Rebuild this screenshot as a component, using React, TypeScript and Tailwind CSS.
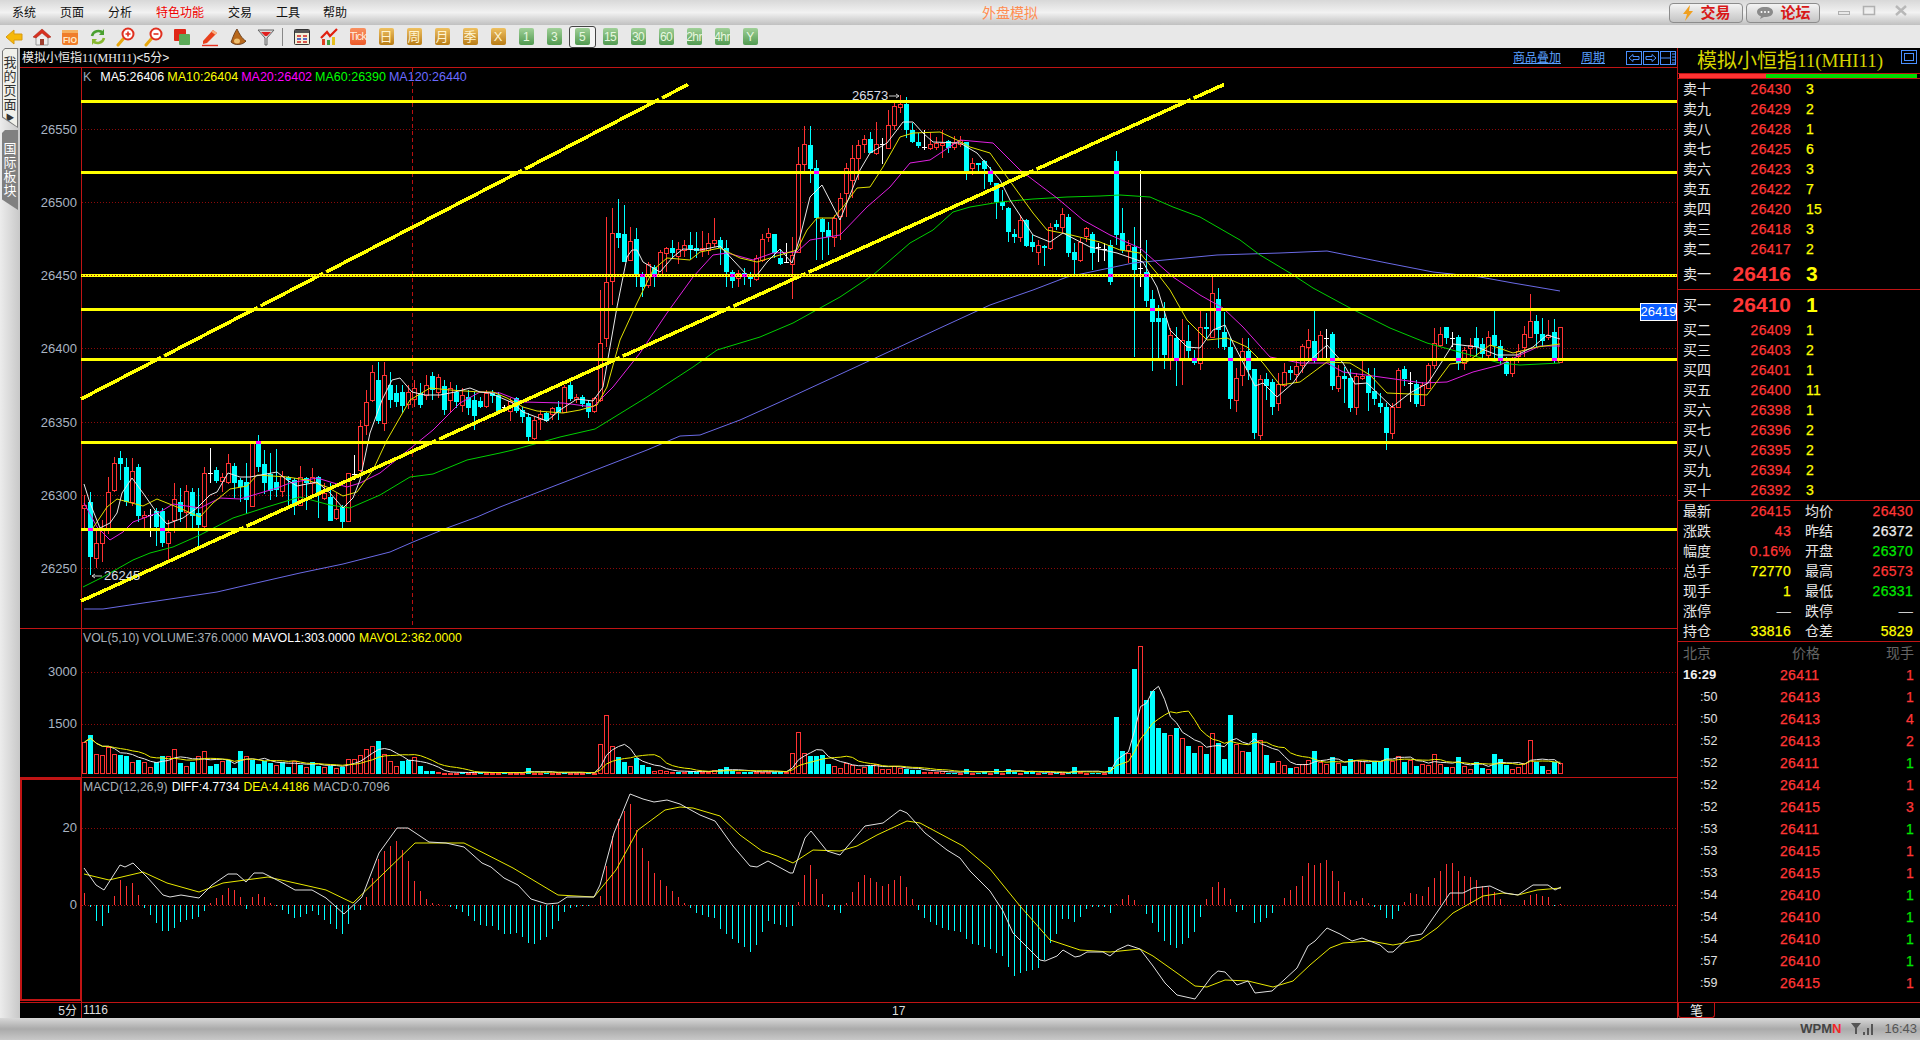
import React from "react";

type P = [number, number];
type C = { t: string; a: number; b: number; h: number; l: number };

const parse = (s: string, base: number): C[] =>
  s.trim().split(",").map((r) => {
    const [t, a, b, h, l] = r.trim().split(/\s+/);
    return { t, a: base + +a / 3, b: base + +b / 3, h: base + +h / 3, l: base + +l / 3 };
  });

const z5 = `r 315 325 285 387,c 305 470 275 525,r 430 475 385 503,r 388 430 360 485,r 277 390 232 402,r 190 272 170 275,c 175 192 153 240,c 200 305 175 318,r 212 305 175 318,c 202 348 192 365,r 345 352 332 392,w 345 345 328 410,c 332 380 325 437,c 332 430 325 440,r 395 428 360 485,r 298 362 250 400,c 305 335 265 365,r 272 335 255 390,c 277 347 265 388,c 340 375 265 440,r 220 380 200 385,w 220 220 145 250,c 210 242 200 248,r 230 242 218 275,r 190 248 162 252,c 198 248 190 295,c 240 262 235 305,c 245 300 190 342,r 130 318 125 322,c 125 200 105 215,c 192 250 150 282,c 222 272 160 300,c 245 270 148 290,r 228 272 212 292,c 230 240 228 325,c 240 315 235 345,r 230 315 198 318,c 235 248 230 330,r 230 248 205 285,c 230 285 228 355,r 280 295 250 300,c 290 362 250 362,r 328 356 280 360,c 320 365 315 383,r 220 365 218 365,w 222 222 165 240,r 78 210 60 215,r 5 75 -30 105`;
const zs = `r 1116 1200 1095 1206,c 1140 1263 1086 1272,r 1125 1269 1086 1293,c 1155 1200 1116 1224,c 1179 1206 1155 1221,c 1176 1218 1155 1239,r 1176 1212 1155 1227,r 1164 1197 1140 1221,c 1179 1215 1149 1224,r 1155 1185 1125 1200,c 1128 1170 1116 1200,r 1131 1176 1122 1194,c 1158 1230 1140 1245,r 1164 1200 1146 1236,c 1176 1206 1155 1224,r 1185 1215 1164 1236,c 1191 1224 1170 1245,c 1200 1248 1176 1290`;
const z10 = `c 632 652 620 655,r 610 650 600 655,c 610 618 600 640,c 615 665 605 668,w 652 652 645 665,r 632 662 625 692,c 625 662 620 670,c 660 682 650 700,c 680 740 670 762,r 690 745 680 750,r 672 688 660 720,c 670 692 665 695,r 655 673 650 690,c 650 668 632 690,r 590 665 585 670,c 585 628 567 632,r 622 628 612 640,c 622 642 615 650,c 640 665 630 685,r 625 665 622 670,r 460 632 300 635,r 275 442 82 470,r 130 275 55 345,c 130 145 28 175,c 132 215 45 215,r 152 208 110 210,c 148 255 115 290,c 255 290 245 320,r 222 285 215 295,c 232 262 225 292,r 187 255 180 258,r 175 190 170 245,c 175 190 150 205,r 178 198 155 222,r 165 180 150 200,c 165 178 125 208,c 175 182 125 205`;
const z7 = `r 475 482 422 500,r 460 480 430 495,r 450 458 385 470,c 450 475 440 525,c 475 545 450 590,c 545 572 540 595,r 550 565 540 592,c 548 560 535 585,c 558 566 545 590,r 505 568 495 572,r 447 510 432 515,r 430 443 415 455,c 432 490 432 505,c 505 522 480 525,w 515 515 460 520,r 495 523 440 628,r 222 485 170 490,r 162 222 108 245,c 165 238 108 280,c 235 385 210 510,c 388 425 385 510,c 420 442 395 495,r 385 442 375 470,r 325 378 310 450,r 235 310 220 380,r 205 272 165 325,r 165 205 150 270,r 148 163 135 190,c 148 188 125 190,r 162 188 95 195,w 162 162 145 222,r 105 173 60 178,r 48 105 38 120,r 42 50 16 70,c 42 120 20 145,c 120 155 100 160,c 155 168 130 175,w 172 172 120 180,r 162 175 125 180,r 160 173 140 180,r 158 165 120 205,c 153 175 150 190,r 160 172 138 180,r 150 162 138 170,c 155 245 155 270,r 220 235 205 255,c 220 225 218 250,c 212 237 210 298,c 245 275 230 285,c 280 335 278 387,c 335 348 300 360,c 355 427 352 455,c 432 440 418 460,r 390 440 375 455,c 390 468 388 470,c 455 470 435 485,r 465 487 450 525,c 468 475 465 527,r 412 475 400 480,c 402 412 390 420,r 372 410 355 430,c 380 490 372 500,c 487 510 460 560,r 455 510 445 515,r 415 440 410 455,c 432 488 425 540,w 470 470 460 515,w 478 478 460 512`;
const z8 = `c 15 125 0 135,c -237 -15 -267 15,c -21 30 -96 39,r 15 30 0 70,c 20 90 -39 350,w 84 84 -210 141,c 95 183 0 200,c 178 245 150 392,c 235 245 195 360,c 235 345 185 388,r 285 358 265 390,c 295 358 262 437,r 300 358 238 435,c 303 332 255 360,c 355 368 330 375,r 262 370 210 390,c 262 268 220 300,r 160 292 105 295,c 178 270 145 325,c 277 322 215 330,c 320 477 295 507,r 415 482 385 515,r 333 405 295 437,c 333 390 295 420,c 387 578 387 597,r 418 587 405 600,c 418 438 400 480,c 427 500 418 525,r 433 490 400 512,r 397 437 368 440,c 390 400 378 420,r 378 402 360 425,r 318 375 312 400,r 300 320 268 355,c 303 358 210 368,r 285 355 272 360,w 295 295 268 362,c 282 438 275 450,r 408 443 375 455,c 408 416 380 490,c 415 503 388 515,r 408 502 400 525,r 408 415 358 420,c 408 458 385 512,c 452 477 385 495,c 490 500 460 520,c 500 578 490 630,r 500 578 490 597,r 390 502 385 503,c 388 418 378 438,w 428 428 395 485,c 432 492 420 500,r 434 494 425 495,r 375 445 370 448,r 310 375 265 388,r 283 315 262 320,c 262 295 262 312,w 295 295 275 320,c 291 368 285 390,r 330 370 320 390,r 315 325 295 350,c 294 322 262 352,c 312 342 295 355,r 292 345 272 358,c 285 318 210 360,c 318 362 300 375,c 365 402 352 408,r 360 398 350 410,r 332 348 312 370,r 283 322 258 350,r 243 292 162 295,c 243 282 225 320,c 282 302 235 320,r 285 292 240 300,c 276 358 238 368,r 262 368 262 368`;
const candles: C[] = [
  ...parse(z5, 400),
  ...parse(zs, 0),
  ...parse(z10, 190),
  ...parse(z7, 90),
  ...parse(z8, 240),
];

const vols: number[] = [
  95, -118, 60, 56, 82, 60, -56, -54, 35, -42, 35, 20, -35, -54, 55, 74, -34, 25, -35, 55, 70, -24, -30, 38, -42, -18, -68, 53, -42, -30, -38, -34, 28, -35, -22, 38, -28, 20, -35, -25, 20, -25, 18, -22, 45, 45, 58, 75, 85, -100, 60, 38, 25, -38, -42, 52, -25, -8, -8, 5, 3, 3, 3, -6, 3, 3, -5, 3, 3, 3, -3, 3, 3, 3, -18, 3, 3, -3, 3, 3, -3, 3, 3, 3, -3, 3, 90, 178, 85, -52, -35, 25, -48, -28, -20, 8, 12, 8, 6, -6,
  6, -8, -6, 6, 6, 12, -14, -20, -8, 5, -6, -6, 6, 6, 6, -6, -6, 6, 64, 127, 64, -53, -53, -58, -29, 24, 18, 34, 28, 16, 22, -24, 30, 16, 14, 25, 18, -14, -12, -12, 6, 6, 6, 8, -3, -3, 3, -16, 3, -4, -6, 3, -16, 3, -14, -6, 4, -6, -6, 4, -3, 3, -3, 3, -3, -22, 5, 4, -3, -4, 4, -20, -172, -70, 64, -316, 385,
  -223, -250, -137, -122, 118, -137, 107, -83, -62, 85, -60, 124, -92, -44, -177, 90, 70, -65, -122, 103, -56, -32, 40, 28, -18, 20, 30, 42, -68, 36, 30, -50, 34, -24, -44, 42, 38, -30, -36, -38, -78, 38, 55, -37, 42, -24, 30, 26, 60, 30, -20, 22, -50, 24, 16, -35, -18, 16, -60, -44, -26, 16, 22, 34, 103, -36, -24, 12, -36, 34,
];

const ma5: P[] = [[84,484],[90,503],[100,528],[110,523],[117,513],[122,493],[132,478],[143,493],[157,513],[167,524],[183,518],[197,508],[210,495],[217,492],[228,473],[240,477],[250,477],[277,472],[287,480],[297,486],[317,482],[330,493],[343,508],[353,498],[360,480],[370,433],[382,400],[392,380],[400,378],[412,392],[425,395],[440,395],[455,392],[470,388],[480,392],[490,393],[513,403],[523,412],[547,421],[560,410],[577,399],[593,401],[603,387],[617,307],[627,257],[632,250],[637,250],[643,262],[660,272],[673,257],[683,249],[700,250],[720,246],[733,260],[747,275],[757,275],[767,262],[780,249],[792,263],[800,237],[810,197],[822,185],[840,220],[860,170],[870,153],[887,143],[903,122],[913,122],[923,133],[933,142],[960,143],[977,153],[1000,180],[1010,200],[1033,235],[1050,242],[1063,233],[1090,247],[1117,253],[1143,262],[1157,287],[1170,330],[1187,347],[1200,348],[1213,330],[1225,325],[1233,343],[1247,370],[1255,386],[1263,383],[1277,397],[1293,383],[1307,363],[1327,345],[1343,363],[1355,384],[1367,383],[1392,407],[1410,393],[1428,383],[1443,360],[1453,344],[1477,347],[1497,355],[1517,355],[1533,347],[1547,335],[1560,339]];
const ma10: P[] = [[93,528],[107,507],[117,499],[143,506],[157,499],[177,507],[200,517],[213,503],[230,489],[247,486],[257,475],[287,477],[307,480],[327,487],[343,496],[357,492],[373,470],[387,440],[410,400],[430,388],[450,390],[480,392],[493,392],[507,398],[523,407],[537,411],[563,413],[580,410],[597,405],[607,387],[620,340],[637,303],[653,270],[667,258],[690,260],[700,252],[720,248],[740,258],[757,262],[780,255],[797,250],[807,230],[817,218],[833,218],[843,207],[857,188],[870,187],[883,167],[900,137],[913,133],[940,132],[957,140],[970,147],[990,153],[1007,177],[1033,213],[1047,230],[1067,234],[1100,242],[1120,250],[1140,253],[1160,277],[1170,290],[1187,320],[1207,340],[1227,338],[1247,347],[1263,363],[1280,385],[1300,382],[1327,362],[1350,363],[1370,375],[1387,393],[1410,394],[1427,395],[1450,364],[1467,362],[1490,345],[1513,353],[1537,347],[1560,344]];
const ma20: P[] = [[84,503],[97,527],[110,540],[123,532],[133,522],[160,512],[173,504],[200,508],[220,498],[240,499],[277,488],[290,483],[317,478],[347,487],[360,483],[380,473],[433,430],[460,403],[480,392],[500,393],[523,402],[563,403],[593,407],[613,387],[640,353],[667,313],[693,277],[713,255],[727,253],[753,260],[773,253],[797,252],[810,240],[840,235],[867,207],[890,187],[910,163],[930,160],[960,140],[993,143],[1020,170],[1057,198],[1083,220],[1110,235],[1140,248],[1173,277],[1200,295],[1223,308],[1243,327],[1270,357],[1300,363],[1327,363],[1343,372],[1373,376],[1423,383],[1447,382],[1473,372],[1500,365],[1520,355],[1540,346],[1560,346]];
const ma60: P[] = [[83,587],[103,577],[133,560],[150,553],[173,547],[200,535],[233,518],[267,507],[300,497],[330,505],[350,508],[380,495],[410,477],[433,474],[467,460],[500,453],[513,450],[560,437],[595,429],[647,397],[693,367],[717,350],[760,337],[793,323],[840,297],[873,275],[910,243],[933,230],[953,212],[970,207],[1000,202],[1033,199],[1067,197],[1100,196],[1120,195],[1150,197],[1173,207],[1200,217],[1240,240],[1260,255],[1290,273],[1313,288],[1350,308],[1390,328],[1427,343],[1463,353],[1500,363],[1520,365],[1560,363]];
const ma120: P[] = [[84,609],[103,609],[150,602],[217,592],[243,586],[300,573],[343,564],[390,552],[413,542],[447,528],[477,517],[500,507],[647,450],[680,436],[700,435],[740,420],[780,402],[897,348],[940,328],[990,305],[1033,290],[1067,277],[1100,270],[1133,263],[1217,255],[1280,253],[1327,251],[1387,263],[1433,272],[1480,277],[1513,283],[1560,291]];

const diff: P[] = [[84,868],[96,885],[104,890],[120,865],[125,867],[133,863],[147,877],[163,895],[170,897],[181,895],[199,898],[212,885],[228,874],[237,874],[246,882],[254,873],[263,873],[279,881],[295,890],[312,890],[326,898],[344,914],[362,897],[379,853],[397,828],[408,828],[429,842],[446,843],[464,847],[482,863],[491,867],[504,878],[518,885],[531,899],[547,904],[558,903],[567,897],[594,897],[600,885],[614,833],[630,794],[643,799],[654,802],[667,800],[680,804],[700,815],[715,821],[733,846],[750,866],[757,867],[768,861],[790,873],[793,873],[805,838],[811,831],[827,851],[840,855],[865,826],[883,823],[900,810],[907,813],[925,833],[947,850],[960,858],[970,871],[990,891],[1003,911],[1013,933],[1023,943],[1040,960],[1045,961],[1057,956],[1063,950],[1075,957],[1080,956],[1087,952],[1103,952],[1110,956],[1117,950],[1128,945],[1140,949],[1153,966],[1165,983],[1177,995],[1195,999],[1212,976],[1218,971],[1225,972],[1237,985],[1248,981],[1255,993],[1272,991],[1297,968],[1308,946],[1315,941],[1327,928],[1340,934],[1352,941],[1362,938],[1380,945],[1388,952],[1393,952],[1410,936],[1422,934],[1440,908],[1450,893],[1463,893],[1473,888],[1490,886],[1505,893],[1518,895],[1533,885],[1548,885],[1555,890],[1561,887]];
const dea: P[] = [[84,874],[109,880],[143,872],[167,883],[199,892],[223,883],[268,877],[304,885],[326,890],[353,903],[384,873],[415,843],[464,843],[513,868],[558,895],[594,897],[616,870],[638,830],[665,810],[680,807],[693,808],[720,816],[740,835],[762,851],[777,856],[793,863],[813,850],[840,851],[857,846],[877,835],[907,821],[920,823],[963,846],[990,869],[1020,906],[1050,940],[1080,950],[1110,952],[1140,949],[1153,956],[1177,973],[1195,986],[1207,987],[1225,980],[1248,981],[1273,987],[1293,981],[1310,965],[1330,948],[1343,943],[1370,941],[1393,945],[1420,940],[1437,928],[1453,913],[1483,896],[1503,893],[1518,895],[1537,890],[1561,888]];

const pts = (a: P[]) => a.map((p) => p.join(",")).join(" ");
const interp = (a: P[], x: number) => {
  if (x <= a[0][0]) return a[0][1];
  for (let i = 1; i < a.length; i++) {
    if (x <= a[i][0]) {
      const t = (x - a[i - 1][0]) / (a[i][0] - a[i - 1][0]);
      return a[i - 1][1] + t * (a[i][1] - a[i - 1][1]);
    }
  }
  return a[a.length - 1][1];
};
const xc = (i: number) => 84 + 6 * i;

const hLines = [100, 171, 274, 308, 358, 441, 528];
const dots = [129, 202, 275, 348, 422, 495, 568];
const diag: [number, number, number, number][] = [
  [81, 399, 688, 84.5],
  [81, 601, 1224, 84.5],
];

function KPane() {
  return (
    <svg width={1657} height={560} viewBox="20 68 1657 560" className="block">
      {dots.map((y) => (
        <line key={y} x1={82} x2={1677} y1={y + 0.5} y2={y + 0.5} stroke="#8c0a0a" strokeDasharray="1 2" />
      ))}
      <line x1={412.5} x2={412.5} y1={68} y2={628} stroke="#b81010" strokeDasharray="4 3" />
      <line x1={81.5} x2={81.5} y1={68} y2={628} stroke="#c01414" />
      <g shapeRendering="crispEdges">
        {candles.map((c, i) => {
          const x = xc(i);
          if (c.t === "c")
            return (
              <g key={i} fill="#00ffff">
                <rect x={x} y={c.h} width={1} height={Math.max(1, c.l - c.h)} />
                <rect x={x - 2} y={c.a} width={5} height={Math.max(1, c.b - c.a)} />
              </g>
            );
          if (c.t === "w")
            return (
              <g key={i} fill="#ffffff">
                <rect x={x} y={c.h} width={1} height={c.l - c.h} />
                <rect x={x - 2} y={c.a} width={5} height={1} />
              </g>
            );
          return (
            <g key={i}>
              <rect x={x} y={c.h} width={1} height={Math.max(0, c.a - c.h)} fill="#ff3232" />
              <rect x={x} y={c.b} width={1} height={Math.max(0, c.l - c.b)} fill="#ff3232" />
              <rect x={x - 1.5} y={Math.round(c.a) + 0.5} width={4} height={Math.max(1, Math.round(c.b - c.a))} fill="#000" stroke="#ff3232" />
            </g>
          );
        })}
      </g>
      <g fill="none" strokeWidth={1}>
        <polyline points={pts(ma120)} stroke="#6a6ae6" />
        <polyline points={pts(ma60)} stroke="#00d000" />
        <polyline points={pts(ma20)} stroke="#e020e0" />
        <polyline points={pts(ma10)} stroke="#e0e000" />
        <polyline points={pts(ma5)} stroke="#e8e8e8" />
      </g>
      {diag.map((d, i) => (
        <line key={i} x1={d[0]} y1={d[1]} x2={d[2]} y2={d[3]} stroke="#ffff00" strokeWidth={3.5} shapeRendering="crispEdges" />
      ))}
      {diag.map((d, i) =>
        hLines
          .filter((h) => h > d[3] && h < d[1])
          .map((h) => {
            const s = (d[3] - d[1]) / (d[2] - d[0]);
            const cx = d[0] + (h - d[1]) / s;
            return <line key={`${i}-${h}`} x1={cx + 1} x2={cx + 4} y1={h + s * 1} y2={h + s * 4} stroke="#000" strokeWidth={5} />;
          }),
      )}
      <g shapeRendering="crispEdges">
        {hLines.map((y) => (
          <rect key={y} x={81} y={y} width={1596} height={3} fill="#ffff00" />
        ))}
        {candles.map((c, i) =>
          c.t === "c"
            ? hLines
                .filter((y) => c.a < y + 2 && c.b > y + 1)
                .map((y) => <rect key={`${i}-${y}`} x={xc(i) - 2} y={y} width={5} height={3} fill="#ff00ff" />)
            : null,
        )}
      </g>
      <line x1={82} x2={1677} y1={275.5} y2={275.5} stroke="#8c0a0a" strokeDasharray="1 2" />
      <g fill="#a9b4c2" fontSize={13} textAnchor="end">
        {[26550, 26500, 26450, 26400, 26350, 26300, 26250].map((v, i) => (
          <text key={v} x={77} y={dots[i] + 5}>{v}</text>
        ))}
      </g>
      <text x={852} y={100} fill="#d8dde5" fontSize={13}>26573</text>
      <path d="M889 96h10m-3-2l3 2l-3 2" stroke="#c8c8c8" fill="none" />
      <path d="M102 576h-10m3-2l-3 2l3 2" stroke="#c8c8c8" fill="none" />
      <text x={104} y={580} fill="#d8dde5" fontSize={13}>26245</text>
    </svg>
  );
}

const movAvg = (n: number): P[] => {
  const h = vols.map(Math.abs);
  return h.map((_, i) => {
    let s = 0;
    let c = 0;
    for (let k = Math.max(0, i - n + 1); k <= i; k++) {
      s += h[k];
      c++;
    }
    return [xc(i) + 0.5, 773.7 - s / c / 3] as P;
  });
};

function VolPane() {
  return (
    <svg width={1657} height={148} viewBox="20 629 1657 148" className="block">
      {[672, 724].map((y) => (
        <line key={y} x1={82} x2={1677} y1={y + 0.5} y2={y + 0.5} stroke="#8c0a0a" strokeDasharray="1 2" />
      ))}
      <line x1={81.5} x2={81.5} y1={629} y2={777} stroke="#c01414" />
      <g shapeRendering="crispEdges">
        {vols.map((v, i) => {
          const h = Math.abs(v) / 3;
          const x = xc(i);
          return v < 0 ? (
            <rect key={i} x={x - 2} y={774 - h} width={5} height={h} fill="#00ffff" />
          ) : (
            <rect key={i} x={x - 1.5} y={Math.round(774 - h) + 0.5} width={4} height={Math.max(1, Math.round(h) - 1)} fill="#000" stroke="#ff3232" />
          );
        })}
      </g>
      <polyline points={pts(movAvg(5))} fill="none" stroke="#e8e8e8" />
      <polyline points={pts(movAvg(10))} fill="none" stroke="#f0f000" />
      <g fill="#a9b4c2" fontSize={13} textAnchor="end">
        <text x={77} y={676}>3000</text>
        <text x={77} y={728}>1500</text>
      </g>
    </svg>
  );
}

function MacdPane() {
  return (
    <svg width={1657} height={224} viewBox="20 778 1657 224" className="block">
      <rect x={21} y={779} width={60} height={221} fill="none" stroke="#c01414" strokeWidth={2} />
      <line x1={81.5} x2={81.5} y1={778} y2={1002} stroke="#c01414" />
      <line x1={82} x2={1677} y1={828.5} y2={828.5} stroke="#8c0a0a" strokeDasharray="1 2" />
      <g shapeRendering="crispEdges">
        {vols.map((_, i) => {
          const x = xc(i);
          const d = 2 * (interp(dea, x) - interp(diff, x));
          const h = Math.abs(d);
          return d > 0 ? (
            <rect key={i} x={x} y={905 - h} width={1} height={h} fill="#ff3232" />
          ) : (
            <rect key={i} x={x} y={905} width={1} height={h} fill="#00ffff" />
          );
        })}
      </g>
      <line x1={82} x2={1677} y1={905.5} y2={905.5} stroke="#c01414" strokeDasharray="1 2" />
      <polyline points={pts(dea)} fill="none" stroke="#e8e800" />
      <polyline points={pts(diff)} fill="none" stroke="#e0e0e0" />
      <g fill="#a9b4c2" fontSize={13} textAnchor="end">
        <text x={77} y={832}>20</text>
        <text x={77} y={909}>0</text>
      </g>
    </svg>
  );
}

const Ic = ({ children }: { children: React.ReactNode }) => (
  <div className="flex h-full w-[28px] items-center justify-center">
    <svg width={20} height={20} viewBox="0 0 20 20">{children}</svg>
  </div>
);

const Lens = ({ minus }: { minus?: boolean }) => (
  <>
    <path d="M8 11L2 18" stroke="#e8a810" strokeWidth={3} strokeLinecap="round" />
    <circle cx={12} cy={7} r={5.5} fill="#fff" stroke="#e03020" strokeWidth={2} />
    <path d={minus ? "M9.5 7h5" : "M9.5 7h5M12 4.500v5"} stroke="#e03020" strokeWidth={1.6} />
  </>
);

function Icons() {
  return (
    <>
      <Ic><path d="M2 10L10 3V7H18V13H10V17Z" fill="#f6b90a" stroke="#d89a10" /></Ic>
      <Ic>
        <path d="M4 10V18H16V10" fill="#eee" stroke="#999" />
        <path d="M8 18V12H12V18" fill="#a04030" />
        <path d="M1 10L10 2L19 10L16 11L10 6L4 11Z" fill="#d83020" stroke="#a02010" strokeWidth={0.5} />
      </Ic>
      <Ic>
        <rect x={2} y={3} width={16} height={15} rx={2} fill="#ef7d2a" />
        <rect x={2} y={3} width={16} height={3} fill="#f5b060" />
        <text x={10} y={16} fontSize={8.5} fill="#ffe8c8" textAnchor="middle" fontWeight={700}>FIO</text>
      </Ic>
      <Ic>
        <path d="M4 9A6.500 6.500 0 0 1 15 6" fill="none" stroke="#4aa030" strokeWidth={2.6} />
        <path d="M16 11A6.500 6.500 0 0 1 5 14" fill="none" stroke="#88b830" strokeWidth={2.6} />
        <path d="M16 2V8H11Z" fill="#4aa030" />
        <path d="M4 18V12H9Z" fill="#88b830" />
      </Ic>
      <Ic><Lens /></Ic>
      <Ic><Lens minus /></Ic>
      <Ic>
        <rect x={2} y={2} width={12} height={12} rx={1} fill="#e02818" />
        <rect x={7} y={7} width={11} height={11} rx={1} fill="#5caa58" />
      </Ic>
      <Ic>
        <path d="M3 14L13 3L17 6L7 16L3 17Z" fill="#e8401c" />
        <path d="M13 3L17 6L15.500 8L11.500 5Z" fill="#f8b080" />
        <path d="M2 18.500H18" stroke="#e83020" strokeWidth={1.400} />
      </Ic>
      <Ic>
        <path d="M9 2C6 6 4 13 3 15C7 19 15 18 18 14C14 12 11 6 9 2Z" fill="#b8681c" stroke="#5a3010" strokeWidth={0.8} />
        <ellipse cx={9} cy={14} rx={3} ry={2.500} fill="#f0c070" />
      </Ic>
      <Ic>
        <path d="M2 3H18L11 11V18H9V11Z" fill="#d8d8d8" stroke="#666" />
        <path d="M5 5H15L11 9H9Z" fill="#e02020" />
      </Ic>
    </>
  );
}

const Gold = ({ t }: { t: string }) => (
  <div className="flex h-full w-[28px] items-center justify-center">
    <div className="flex h-[17px] w-[15px] items-center justify-center rounded-[2px] bg-linear-to-b from-[#eec060] to-[#b87c10] text-[13px] leading-none text-[#fff4d0]">{t}</div>
  </div>
);
const Green = ({ t, sel }: { t: string; sel?: boolean }) => (
  <div className="flex h-full w-[28px] items-center justify-center">
    <div className={sel ? "flex h-[22px] w-[27px] items-center justify-center rounded-[3px] border border-[#444] bg-[#f4f4f4]" : "flex h-[22px] w-[27px] items-center justify-center"}>
      <div className="flex h-[17px] w-[15px] items-center justify-center rounded-[2px] bg-linear-to-b from-[#a0d098] to-[#509a50] text-[12px] leading-none tracking-[-0.6px] text-[#e8f8e0]">{t}</div>
    </div>
  </div>
);

const Win = ({ children }: { children: React.ReactNode }) => <div className="flex h-[20px] w-[74px] items-center justify-center gap-[7px] rounded-[4px] border border-[#8c8c8c] bg-linear-to-b from-[#f4f4f4] to-[#c4c4c4] text-[15px] font-bold leading-none text-[#d81818]">{children}</div>;

function TitleBar() {
  return (
    <div className="flex h-[25px] items-center bg-linear-to-b from-[#d8d8d8] via-[#f2f2f2] to-[#c0c0c0]">
      <div className="flex pl-[12px] text-[12px] leading-none text-[#111]">
        <span className="w-[48px]">系统</span>
        <span className="w-[48px]">页面</span>
        <span className="w-[48px]">分析</span>
        <span className="w-[72px] text-[#f00000]">特色功能</span>
        <span className="w-[48px]">交易</span>
        <span className="w-[47px]">工具</span>
        <span>帮助</span>
      </div>
      <div className="ml-[635px] w-[60px] text-[14px] leading-none text-[#ff8c50]">外盘模拟</div>
      <div className="ml-[627px] flex gap-[3px]">
        <Win>
          <svg width={12} height={16} viewBox="0 0 12 16"><path d="M8 0L1 9H5L3 16L11 6H7Z" fill="#f0a020" /></svg>
          <span>交易</span>
        </Win>
        <Win>
          <svg width={18} height={14} viewBox="0 0 18 14">
            <path d="M9 1C4 1 1 3 1 6C1 8 3 10 5 10.500L4 13L8 11C14 11 17 9 17 6C17 3 14 1 9 1Z" fill="#8a8a8a" />
            <circle cx={5.500} cy={6} r={1} fill="#fff" />
            <circle cx={9} cy={6} r={1} fill="#fff" />
            <circle cx={12.500} cy={6} r={1} fill="#fff" />
          </svg>
          <span>论坛</span>
        </Win>
      </div>
      <svg width={72} height={20} viewBox="0 0 72 20" className="ml-[18px]">
        <rect x={0.5} y={8.500} width={11} height={3} fill="#e8e8e8" stroke="#b0b0b0" />
        <rect x={25.500} y={3.500} width={11} height={8} fill="none" stroke="#b0b0b0" strokeWidth={1.500} />
        <path d="M58 3L68 12M68 3L58 12" stroke="#b8b8b8" strokeWidth={2.500} />
      </svg>
    </div>
  );
}

function Toolbar() {
  return (
    <div className="flex h-[23px] items-center bg-[#e8e8e8]">
      <Icons />
      <div className="flex h-full w-[8px] items-center pl-[2px]">
        <div className="h-[18px] w-px bg-[#888]" />
      </div>
      <Ic>
        <rect x={2.500} y={2.500} width={15} height={15} rx={1} fill="#f4f0d8" stroke="#333" />
        <rect x={3} y={3} width={14} height={3} fill="#555" />
        <path d="M5 9H9M11 9H15" stroke="#d02020" strokeWidth={1.400} />
        <path d="M5 12H9M11 12H15" stroke="#2040c0" strokeWidth={1.400} />
        <path d="M5 15H9M11 15H15" stroke="#d02020" strokeWidth={1.400} />
      </Ic>
      <Ic>
        <rect x={2} y={12} width={3} height={6} fill="#e04020" />
        <rect x={7} y={13} width={3} height={5} fill="#40a040" />
        <rect x={12} y={10} width={3} height={8} fill="#e8c020" />
        <path d="M1 11L7 5L10 9L17 2" fill="none" stroke="#e02010" strokeWidth={2.200} />
      </Ic>
      <div className="flex h-full w-[28px] items-center justify-center">
        <div className="flex h-[17px] w-[16px] items-center justify-center rounded-[2px] bg-linear-to-b from-[#f89060] to-[#ec5a28] text-[11px] leading-none tracking-[-0.8px] text-[#fff0e0]">Tick</div>
      </div>
      {["日", "周", "月", "季", "X"].map((t) => <Gold key={t} t={t} />)}
      {["1", "3"].map((t) => <Green key={t} t={t} />)}
      <Green t="5" sel />
      {["15", "30", "60", "2hr", "4hr", "Y"].map((t) => <Green key={t} t={t} />)}
    </div>
  );
}

function Sidebar() {
  const chars = (s: string) => s.split("").map((c) => <span key={c} className="block h-[14px] leading-[14px]">{c}</span>);
  return (
    <div className="w-[20px] shrink-0 bg-linear-to-r from-[#ececec] to-[#c8c8c8] pl-[2px]">
      <div className="h-[80px] w-[16px] bg-[#777] [clip-path:polygon(3px_0,100%_0,100%_100%,0_87%,0_3px)]">
        <div className="h-[80px] w-[15px] bg-[#f0f0ea] pl-[1px] pt-[8px] text-center text-[13px] text-[#333] [clip-path:polygon(3px_1px,100%_1px,100%_98%,1px_86%,1px_3px)]">
          {chars("我的页面")}
          <span className="mt-[1px] block text-[9px] leading-[10px]">▶</span>
        </div>
      </div>
      <div className="mt-[2px] h-[80px] w-[16px] bg-[#808080] pt-[12px] text-center text-[13px] text-white [clip-path:polygon(3px_0,100%_0,100%_100%,0_87%,0_3px)]">
        {chars("国际板块")}
      </div>
    </div>
  );
}

const BoxIcon = ({ d }: { d: string }) => (
  <svg width={16} height={14} viewBox="0 0 16 14" className="block">
    <rect x={0.5} y={0.5} width={15} height={13} fill="none" stroke="#4a90ff" />
    <path d={d} fill="none" stroke="#4a90ff" />
  </svg>
);

function ChartColumn() {
  return (
    <div className="flex w-[1657px] shrink-0 flex-col">
      <div className="flex h-[20px] items-center whitespace-nowrap border-b border-[#c01414] pl-[2px] pr-[1px]">
        <span className="text-[12px] leading-none text-[#eee]">模拟小恒指<span className="font-['Liberation_Serif',serif]">11(MHI11)</span>&lt;5分&gt;</span>
        <a className="ml-auto text-[12px] leading-none text-[#5aa0ff] underline">商品叠加</a>
        <a className="ml-[20px] text-[12px] leading-none text-[#5aa0ff] underline">周期</a>
        <div className="ml-[21px] flex shrink-0 gap-px">
          <BoxIcon d="M3 7L7 3.500V5.500H13V8.500H7V10.500Z" />
          <BoxIcon d="M13 7L9 3.500V5.500H3V8.500H9V10.500Z" />
          <BoxIcon d="M0.500 7H10.500M10.500 0.500V13.500M12 3H15M12 6H15M12 9H15M12 12H15" />
        </div>
      </div>
      <div className="relative h-[560px]">
        <KPane />
        <div className="absolute left-[63px] top-[2px] flex gap-[3px] text-[12.5px] leading-[15px]">
          <span className="mr-[6px] text-[#9ab]">K</span>
          <span className="text-white">MA5:26406</span>
          <span className="text-[#ffff00]">MA10:26404</span>
          <span className="text-[#ff00ff]">MA20:26402</span>
          <span className="text-[#00ff00]">MA60:26390</span>
          <span className="text-[#6a6aff]">MA120:26440</span>
        </div>
        <div className="absolute left-[1620px] top-[235px] flex h-[18px] w-[37px] items-center justify-center border border-white bg-[#0a5cff] text-[13px] text-white">26419</div>
      </div>
      <div className="relative h-[149px] border-t border-[#c01414]">
        <VolPane />
        <div className="absolute left-[63px] top-[2px] flex gap-[4px] text-[12.2px] leading-[15px]">
          <span className="text-[#a8b0b8]">VOL(5,10) VOLUME:376.0000</span>
          <span className="text-white">MAVOL1:303.0000</span>
          <span className="text-[#ffff00]">MAVOL2:362.0000</span>
        </div>
      </div>
      <div className="relative h-[225px] border-t border-[#c01414]">
        <MacdPane />
        <div className="absolute left-[63px] top-[2px] flex gap-[4px] text-[12.2px] leading-[15px]">
          <span className="text-[#a8b0b8]">MACD(12,26,9)</span>
          <span className="text-white">DIFF:4.7734</span>
          <span className="text-[#ffff00]">DEA:4.4186</span>
          <span className="text-[#a8b0b8]">MACD:0.7096</span>
        </div>
      </div>
      <div className="flex h-[16px] items-center border-t border-[#c01414] text-[12px] leading-none text-[#ddd]">
        <span className="w-[61px] pr-[4px] text-right">5分</span>
        <span className="w-[811px] self-stretch border-l border-[#c01414] pl-[1px] leading-[15px]">1116</span>
        <span>17</span>
      </div>
    </div>
  );
}

const RED = "text-[#ff3636]";
const YEL = "text-[#ffff00]";
const GRN = "text-[#00e600]";
const NUM = "text-[14px] tracking-[0.3px] [-webkit-text-stroke:0.25px]";

function BookRow({ l, p, q }: { l: string; p: string; q: string }) {
  return (
    <div className="flex h-[20px] items-center pl-[5px]">
      <span className="w-[64px] text-[14px] text-[#e8e8e8]">{l}</span>
      <span className={`w-[44px] text-right ${NUM} ${RED}`}>{p}</span>
      <span className={`ml-[15px] ${NUM} ${YEL}`}>{q}</span>
    </div>
  );
}
function BigRow({ l, p, q, border }: { l: string; p: string; q: string; border?: boolean }) {
  return (
    <div className={`flex h-[30px] items-center pl-[5px] ${border ? "box-content border-b border-[#c01414]" : ""}`}>
      <span className="w-[44px] text-[14px] text-[#e8e8e8]">{l}</span>
      <span className={`w-[64px] text-right text-[21px] font-bold ${RED}`}>{p}</span>
      <span className={`ml-[15px] text-[21px] font-bold ${YEL}`}>{q}</span>
    </div>
  );
}
function StatRow({ a, av, ac, b, bv, bc }: { a: string; av: string; ac: string; b: string; bv: string; bc: string }) {
  return (
    <div className="flex h-[20px] items-center pl-[5px]">
      <span className="w-[36px] text-[14px] text-[#e8e8e8]">{a}</span>
      <span className={`w-[72px] text-right ${NUM} ${ac}`}>{av}</span>
      <span className="ml-[14px] w-[36px] text-[14px] text-[#e8e8e8]">{b}</span>
      <span className={`w-[72px] text-right ${NUM} ${bc}`}>{bv}</span>
    </div>
  );
}

const ticks: [string, string, string, boolean][] = [
  [":50", "26413", "1", true],
  [":50", "26413", "4", true],
  [":52", "26413", "2", true],
  [":52", "26411", "1", false],
  [":52", "26414", "1", true],
  [":52", "26415", "3", true],
  [":53", "26411", "1", false],
  [":53", "26415", "1", true],
  [":53", "26415", "1", true],
  [":54", "26410", "1", false],
  [":54", "26410", "1", false],
  [":54", "26410", "1", false],
  [":57", "26410", "1", false],
  [":59", "26415", "1", true],
];

function RightPanel() {
  const sell: [string, string, string][] = [["卖十","26430","3"],["卖九","26429","2"],["卖八","26428","1"],["卖七","26425","6"],["卖六","26423","3"],["卖五","26422","7"],["卖四","26420","15"],["卖三","26418","3"],["卖二","26417","2"]];
  const buy: [string, string, string][] = [["买二","26409","1"],["买三","26403","2"],["买四","26401","1"],["买五","26400","11"],["买六","26398","1"],["买七","26396","2"],["买八","26395","2"],["买九","26394","2"],["买十","26392","3"]];
  return (
    <div className="flex w-[243px] flex-col border-l border-[#c01414]">
      <div className="relative flex h-[25px] items-center pl-[19px] leading-none text-[#d4d400]">
        <span className="text-[20px]">模拟小恒指</span>
        <span className="font-['Liberation_Serif',serif] text-[19px]">11(MHI11)</span>
        <svg width={16} height={14} viewBox="0 0 16 14" className="absolute right-[3px] top-[2px]">
          <rect x={0.500} y={0.500} width={15} height={13} fill="none" stroke="#4a90ff" />
          <rect x={3.500} y={3.500} width={9} height={7} fill="none" stroke="#4a90ff" />
        </svg>
      </div>
      <div className="flex h-[6px] border-y border-[#c01414] px-[1px]">
        <div className="w-[87px] bg-[#ff3232]" />
        <div className="w-[151px] bg-[#00dc00]" />
      </div>
      {sell.map((r) => <BookRow key={r[0]} l={r[0]} p={r[1]} q={r[2]} />)}
      <BigRow l="卖一" p="26416" q="3" border />
      <BigRow l="买一" p="26410" q="1" />
      {buy.map((r) => <BookRow key={r[0]} l={r[0]} p={r[1]} q={r[2]} />)}
      <div className="border-t border-[#c01414]">
        <StatRow a="最新" av="26415" ac={RED} b="均价" bv="26430" bc={RED} />
        <StatRow a="涨跌" av="43" ac={RED} b="昨结" bv="26372" bc="text-[#eeeeee]" />
        <StatRow a="幅度" av="0.16%" ac={RED} b="开盘" bv="26370" bc={GRN} />
        <StatRow a="总手" av="72770" ac={YEL} b="最高" bv="26573" bc={RED} />
        <StatRow a="现手" av="1" ac={YEL} b="最低" bv="26331" bc={GRN} />
        <StatRow a="涨停" av="—" ac="text-[#cccccc]" b="跌停" bv="—" bc="text-[#cccccc]" />
        <StatRow a="持仓" av="33816" ac={YEL} b="仓差" bv="5829" bc={YEL} />
      </div>
      <div className="flex-1 border-t border-[#c01414]">
        <div className="flex h-[22px] items-center pl-[5px] pr-[6px] text-[14px] text-[#666]">
          <span className="w-[109px]">北京</span>
          <span className="flex-1">价格</span>
          <span>现手</span>
        </div>
        <div className="flex h-[22px] items-center pl-[5px] pr-[6px]">
          <span className="w-[97px] text-[13px] font-bold text-[#f0f0f0]">16:29</span>
          <span className={`flex-1 ${NUM} ${RED}`}>26411</span>
          <span className={`${NUM} ${RED}`}>1</span>
        </div>
        {ticks.map((t, i) => (
          <div key={i} className="flex h-[22px] items-center pl-[22px] pr-[6px]">
            <span className="w-[80px] text-[12.500px] text-[#e0e0e0]">{t[0]}</span>
            <span className={`flex-1 ${NUM} ${RED}`}>{t[1]}</span>
            <span className={`${NUM} ${t[3] ? RED : GRN}`}>{t[2]}</span>
          </div>
        ))}
      </div>
      <div className="h-[16px] border-t border-[#c01414]">
        <div className="flex h-[15px] w-[37px] items-center justify-center rounded-b-[3px] border-x border-b border-[#c01414] text-[13px] leading-none text-[#eee]">笔</div>
      </div>
    </div>
  );
}

export default function App() {
  return (
    <div className="flex h-[1040px] w-[1920px] flex-col overflow-hidden font-['Liberation_Sans','Noto_Sans_CJK_SC',sans-serif]">
      <TitleBar />
      <Toolbar />
      <div className="flex h-[970px]">
        <Sidebar />
        <div className="flex flex-1 bg-black">
          <ChartColumn />
          <RightPanel />
        </div>
      </div>
      <div className="flex h-[22px] items-center justify-end bg-linear-to-b from-[#d8d8d8] via-[#aaaaaa] to-[#c8c8c8] pr-[3px]">
        <span className="text-[13px] font-bold text-[#444]">WPM<span className="text-[#f02828]">N</span></span>
        <svg width={24} height={14} viewBox="0 0 24 14" className="ml-[9px]">
          <path d="M1 1H11L7 6V12H5V6Z" fill="#555" />
          <rect x={13} y={10} width={2} height={3} fill="#555" />
          <rect x={17} y={6} width={2} height={7} fill="#555" />
          <rect x={21} y={2} width={2} height={11} fill="#555" />
        </svg>
        <span className="ml-[10px] text-[13px] text-[#555]">16:43</span>
      </div>
    </div>
  );
}
